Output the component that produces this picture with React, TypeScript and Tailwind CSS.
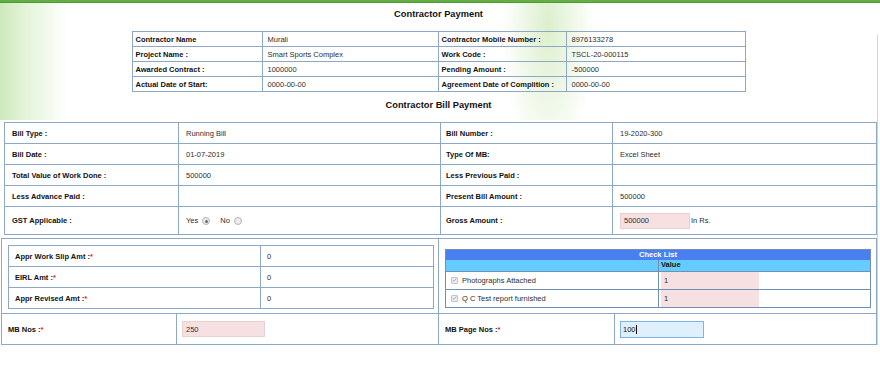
import type { ReactNode } from 'react';

// Colours sampled from the reference
const BORDER = 'border-[#8ea7c2]';

type Pair = [string, string];

const contractorRows: [Pair, Pair][] = [
  [['Contractor Name', 'Murali'], ['Contractor Mobile Number :', '8976133278']],
  [['Project Name :', 'Smart Sports Complex'], ['Work Code :', 'TSCL-20-000115']],
  [['Awarded Contract :', '1000000'], ['Pending Amount :', '-500000']],
  [['Actual Date of Start:', '0000-00-00'], ['Agreement Date of Complition :', '0000-00-00']],
];

const billRows: [Pair, Pair][] = [
  [['Bill Type :', 'Running Bill'], ['Bill Number :', '19-2020-300']],
  [['Bill Date :', '01-07-2019'], ['Type Of MB:', 'Excel Sheet']],
  [['Total Value of Work Done :', '500000'], ['Less Previous Paid :', '']],
  [['Less Advance Paid :', ''], ['Present Bill Amount :', '500000']],
];

function Req() {
  return <span className="text-[#e02020]">*</span>;
}

function Radio({ checked }: { checked?: boolean }) {
  return (
    <span className="inline-flex items-center justify-center w-[8px] h-[8px] rounded-full border border-[#b5b5b5] bg-[#ececec] align-middle">
      {checked && <span className="w-[3px] h-[3px] rounded-full bg-[#6b6b6b]" />}
    </span>
  );
}

function CheckBox() {
  return (
    <span className="inline-flex items-center justify-center w-[7px] h-[7px] border border-[#c4c4c4] bg-[#eeeeee] rounded-[1px]">
      <svg viewBox="0 0 8 8" className="w-[6px] h-[6px]">
        <path d="M1.2 4.2 L3.1 6 L6.8 1.6" fill="none" stroke="#9a9a9a" strokeWidth="1.3" />
      </svg>
    </span>
  );
}

function Cell({ children, className = '' }: { children?: ReactNode; className?: string }) {
  return <td className={`border ${BORDER} p-0 align-middle ${className}`}>{children}</td>;
}

export default function App() {
  return (
    <div className="w-[880px] h-[367px] overflow-hidden bg-white text-[7.5px] leading-[9px] text-[#2e2e2e] font-['Liberation_Sans',Arial,sans-serif] flex flex-col">
      {/* top green strip */}
      <div className="h-[3px] bg-[#62b043] border-b border-[#4f9a35] shrink-0" />

      <div className="flex flex-1 min-h-0">
        <div className="w-[877px] flex flex-col">
          {/* ── Header area with soft green glow ───────────────── */}
          <div className="h-[117px] flex flex-col items-center bg-[linear-gradient(to_right,#cde9bb_0px,#e3f3d8_24px,#ffffff00_68px),radial-gradient(ellipse_46px_150px_at_548px_20px,#dcefcd,#ffffff00)]">
            <div className="mt-[5px] h-[12px] leading-[12px] text-[9.3px] font-bold text-[#111]">Contractor Payment</div>

            <table className={`mt-[11px] w-[613px] border-collapse border ${BORDER} table-fixed`}>
              <colgroup>
                <col className="w-[130px]" />
                <col className="w-[176px]" />
                <col className="w-[128px]" />
                <col className="w-[179px]" />
              </colgroup>
              <tbody>
                {contractorRows.map(([l, r]) => (
                  <tr key={l[0]} className="h-[15px]">
                    <Cell className="pl-[3px] font-bold text-[#111]">{l[0]}</Cell>
                    <Cell className="pl-[5px]">{l[1]}</Cell>
                    <Cell className="pl-[3px] font-bold text-[#111]">{r[0]}</Cell>
                    <Cell className="pl-[5px]">{r[1]}</Cell>
                  </tr>
                ))}
              </tbody>
            </table>

            <div className="mt-[7px] h-[12px] leading-[12px] text-[9.3px] font-bold text-[#111]">Contractor Bill Payment</div>
          </div>

          {/* ── Bill details ─────────────────────────────────────── */}
          <div className="pl-[4px] pt-[2px]">
            <table className={`w-[872px] border-collapse border ${BORDER} table-fixed`}>
              <colgroup>
                <col className="w-[174px]" />
                <col className="w-[262px]" />
                <col className="w-[172px]" />
                <col className="w-[264px]" />
              </colgroup>
              <tbody>
                {billRows.map(([l, r]) => (
                  <tr key={l[0]} className="h-[21px]">
                    <Cell className="pl-[7px] font-bold text-[#111]">{l[0]}</Cell>
                    <Cell className="pl-[7px]">{l[1]}</Cell>
                    <Cell className="pl-[5px] font-bold text-[#111]">{r[0]}</Cell>
                    <Cell className="pl-[7px]">{r[1]}</Cell>
                  </tr>
                ))}
                <tr className="h-[28px]">
                  <Cell className="pl-[7px] font-bold text-[#111]">GST Applicable :</Cell>
                  <Cell className="pl-[7px]">
                    <div className="flex items-center">
                      <span>Yes</span>
                      <span className="ml-[4px]"><Radio checked /></span>
                      <span className="ml-[10px]">No</span>
                      <span className="ml-[4px]"><Radio /></span>
                    </div>
                  </Cell>
                  <Cell className="pl-[5px] font-bold text-[#111]">Gross Amount :</Cell>
                  <Cell className="pl-[7px]">
                    <div className="flex items-center">
                      <div className="w-[70px] h-[16px] bg-[#f6e0e1] border border-[#ead0d0] pl-[3px] flex items-center">500000</div>
                      <span className="ml-[1px]">In Rs.</span>
                    </div>
                  </Cell>
                </tr>
              </tbody>
            </table>
          </div>

          {/* ── Amounts, check list and MB numbers ──────────────── */}
          <div className="pl-[1px] pt-[3px]">
            <table className={`w-[875px] border-collapse border ${BORDER} table-fixed`}>
              <colgroup>
                <col className="w-[175px]" />
                <col className="w-[262px]" />
                <col className="w-[176px]" />
                <col className="w-[262px]" />
              </colgroup>
              <tbody>
                <tr className="h-[75px]">
                  <td colSpan={2} className={`border ${BORDER} p-0 align-top`}>
                    <div className="pl-[6px] pt-[6px]">
                      <table className={`w-[425px] border-collapse border ${BORDER} table-fixed`}>
                        <colgroup>
                          <col className="w-[252px]" />
                          <col className="w-[173px]" />
                        </colgroup>
                        <tbody>
                          {['Appr Work Slip Amt :', 'EIRL Amt :', 'Appr Revised Amt :'].map((t) => (
                            <tr key={t} className="h-[21px]">
                              <Cell className="pl-[6px] font-bold text-[#111]">
                                {t}
                                <Req />
                              </Cell>
                              <Cell className="pl-[6px]">0</Cell>
                            </tr>
                          ))}
                        </tbody>
                      </table>
                    </div>
                  </td>
                  <td colSpan={2} className={`border ${BORDER} p-0 align-top`}>
                    <div className="pl-[6px] pt-[10px]">
                      <table className="w-[425px] border-collapse border border-[#6f8fb3] table-fixed">
                        <colgroup>
                          <col className="w-[213px]" />
                          <col className="w-[212px]" />
                        </colgroup>
                        <tbody>
                          <tr className="h-[10px]">
                            <td colSpan={2} className="p-0 bg-[#4a7ff0] text-white font-bold text-center leading-[10px]">
                              Check List
                            </td>
                          </tr>
                          <tr className="h-[11px]">
                            <td className="p-0 bg-[#66ccff] border-r border-[#6f8fb3]" />
                            <td className="p-0 pl-[2px] bg-[#66ccff] font-bold text-[#111] leading-[10px]">Value</td>
                          </tr>
                          {['Photographs Attached', 'Q C Test report furnished'].map((t) => (
                            <tr key={t} className="h-[17px]">
                              <td className="p-0 pl-[5px] border border-[#6f8fb3]">
                                <div className="flex items-center">
                                  <CheckBox />
                                  <span className="ml-[4px]">{t}</span>
                                </div>
                              </td>
                              <td className="p-0 pl-[2px] border border-[#6f8fb3]">
                                <div className="w-[98px] h-[17px] bg-[#f6e0e1] pl-[3px] flex items-center">1</div>
                              </td>
                            </tr>
                          ))}
                        </tbody>
                      </table>
                    </div>
                  </td>
                </tr>
                <tr className="h-[31px]">
                  <td className={`border ${BORDER} p-0 pl-[6px] font-bold text-[#111]`}>
                    MB Nos :<Req />
                  </td>
                  <td className={`border ${BORDER} p-0 pl-[5px]`}>
                    <div className="w-[83px] h-[16px] bg-[#f6e0e1] border border-[#ead0d0] pl-[3px] flex items-center">250</div>
                  </td>
                  <td className={`border ${BORDER} p-0 pl-[6px] font-bold text-[#111]`}>
                    MB Page Nos :<Req />
                  </td>
                  <td className={`border ${BORDER} p-0 pl-[5px]`}>
                    <div className="w-[84px] h-[17px] bg-[#dff0fd] border border-[#7fb3e6] pl-[2px] flex items-center text-[#111]">
                      100<span className="w-px h-[9px] bg-[#111]" />
                    </div>
                  </td>
                </tr>
              </tbody>
            </table>
          </div>
        </div>

        {/* page edge / scrollbar line */}
        <div className="w-[3px] pt-[32px]">
          <div className="h-[310px] border-l border-[#d4d4d4]" />
        </div>
      </div>
    </div>
  );
}
